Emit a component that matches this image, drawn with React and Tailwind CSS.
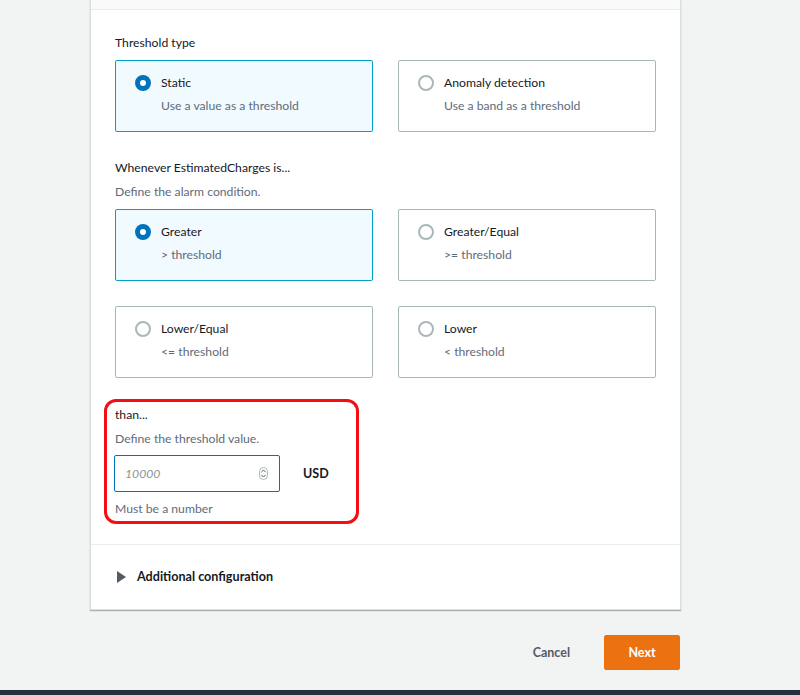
import React from 'react'

const thresholdTypes = [
  { label: 'Static', hint: 'Use a value as a threshold', selected: true },
  { label: 'Anomaly detection', hint: 'Use a band as a threshold' },
]

const conditions = [
  { label: 'Greater', hint: '> threshold', selected: true },
  { label: 'Greater/Equal', hint: '>= threshold' },
  { label: 'Lower/Equal', hint: '<= threshold' },
  { label: 'Lower', hint: '< threshold' },
]

function Radio({ checked }) {
  return checked ? (
    <span className="h-4 w-4 shrink-0 rounded-full border-[5px] border-[#0073bb] bg-white" />
  ) : (
    <span className="h-4 w-4 shrink-0 rounded-full border-2 border-[#aab7b8] bg-white" />
  )
}

function Tile({ label, hint, selected }) {
  return (
    <div
      className={`h-[72px] rounded-[2px] border px-[19px] pt-[14px] ${
        selected ? 'border-[#00a1c9] bg-[#f1faff]' : 'border-[#aab7b8] bg-white'
      }`}
    >
      <div className="flex h-4 items-center gap-[10px]">
        <Radio checked={selected} />
        <span className="text-[#16191f]">{label}</span>
      </div>
      <div className="mt-[7px] pl-[26px] leading-4 text-[#5f6b7a]">{hint}</div>
    </div>
  )
}

function Spinner() {
  return (
    <svg width="9" height="13" viewBox="0 0 9 13" fill="none" stroke="#545b64" strokeWidth="1">
      <rect x="0.5" y="0.5" width="8" height="12" rx="4" stroke="#aab7b8" />
      <path d="M2.5 5 L4.5 3 L6.5 5" strokeLinecap="round" strokeLinejoin="round" />
      <path d="M2.5 8 L4.5 10 L6.5 8" strokeLinecap="round" strokeLinejoin="round" />
    </svg>
  )
}

export default function App() {
  return (
    <div className="flex h-[695px] flex-col overflow-hidden bg-[#f2f3f3] font-['Lato',sans-serif] text-[12.2px] leading-4 text-[#16191f]">
      <div className="ml-[90px] w-[591px] border-x border-b border-[#dcdfe0] bg-white shadow-[0_1px_1px_0_rgba(0,28,36,0.3)]">
        <div className="h-[10px] border-b border-[#eaeded] bg-[#fafafa]" />

        <div className="px-[24px] pt-[25px] pb-[20px]">
          <div>Threshold type</div>
          <div className="mt-[9px] grid grid-cols-2 gap-[25px]">
            {thresholdTypes.map((t) => (
              <Tile key={t.label} {...t} />
            ))}
          </div>

          <div className="mt-[28px]">Whenever EstimatedCharges is...</div>
          <div className="mt-[8px] text-[#5f6b7a]">Define the alarm condition.</div>
          <div className="mt-[9px] grid grid-cols-2 gap-[25px]">
            {conditions.map((c) => (
              <Tile key={c.label} {...c} />
            ))}
          </div>

          <div className="mt-[21px] -ml-[11px] w-[255px] rounded-[12px] border-[3px] border-[#f40d12] pt-[5px] pb-[4px] pl-[7px]">
            <div className="pl-px">than...</div>
            <div className="mt-[8px] pl-px text-[#5f6b7a]">Define the threshold value.</div>
            <div className="mt-[8px] flex items-center">
              <div className="flex h-[37px] w-[166px] items-center justify-between rounded-[2px] border border-[#0073bb] pl-[10px] pr-[11px]">
                <span className="italic text-[#879596]">10000</span>
                <Spinner />
              </div>
              <span className="ml-[23px] text-[12.5px] font-bold text-[#16191f]">USD</span>
            </div>
            <div className="mt-[9px] pl-px text-[#5f6b7a]">Must be a number</div>
          </div>
        </div>

        <div className="flex h-[65px] items-center gap-[11px] border-t border-[#eaeded] pl-[26px]">
          <svg width="9" height="12" viewBox="0 0 9 12">
            <path d="M0 0 L9 6 L0 12 Z" fill="#545b64" />
          </svg>
          <span className="text-[12.6px] font-bold text-[#16191f]">Additional configuration</span>
        </div>
      </div>

      <div className="mt-[25px] ml-[90px] flex w-[590px] items-center justify-end">
        <button className="mr-[34px] text-[12.5px] font-bold text-[#545b64]">Cancel</button>
        <button className="h-[35px] w-[76px] rounded-[2px] border border-[#ec7211] bg-[#ec7211] text-[12.5px] font-bold text-white">
          Next
        </button>
      </div>

      <div className="mt-auto h-[5px] bg-[#232f3e]" />
    </div>
  )
}
